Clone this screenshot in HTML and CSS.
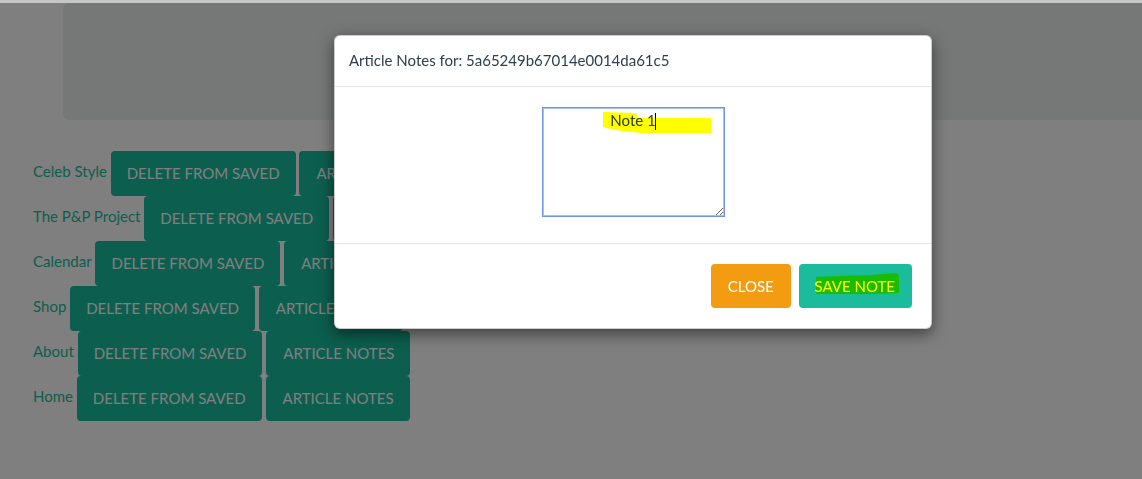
FILE: index.html
```html
<!DOCTYPE html>
<html lang="en">
<head>
<meta charset="utf-8">
<title>Saved Articles</title>
<link rel="stylesheet" href="styles.css">
</head>
<body>
<div class="topline"></div>
<div class="jumbotron"></div>
<div class="saved-list">
  <div class="saved-row"><a class="saved-title" href="#">Celeb Style</a> <button class="btn btn-success btn-delete">Delete from saved</button> <button class="btn btn-success btn-notes">Article Notes</button></div>
  <div class="saved-row"><a class="saved-title" href="#">The P&amp;P Project</a> <button class="btn btn-success btn-delete">Delete from saved</button> <button class="btn btn-success btn-notes">Article Notes</button></div>
  <div class="saved-row"><a class="saved-title" href="#">Calendar</a> <button class="btn btn-success btn-delete">Delete from saved</button> <button class="btn btn-success btn-notes">Article Notes</button></div>
  <div class="saved-row"><a class="saved-title" href="#">Shop</a> <button class="btn btn-success btn-delete">Delete from saved</button> <button class="btn btn-success btn-notes">Article Notes</button></div>
  <div class="saved-row"><a class="saved-title" href="#">About</a> <button class="btn btn-success btn-delete">Delete from saved</button> <button class="btn btn-success btn-notes">Article Notes</button></div>
  <div class="saved-row"><a class="saved-title" href="#">Home</a> <button class="btn btn-success btn-delete">Delete from saved</button> <button class="btn btn-success btn-notes">Article Notes</button></div>
</div>

<div class="backdrop"></div>

<div class="modal-content">
  <div class="modal-header">
    <h4 class="modal-title">Article Notes for: 5a65249b67014e0014da61c5</h4>
  </div>
  <div class="modal-body">
    <textarea class="note-input">Note 1</textarea>
  </div>
  <div class="modal-footer">
    <button class="btn btn-warning">Close</button> <button class="btn btn-save">Save Note</button>
  </div>
</div>

<svg class="marker" width="1142" height="479" viewBox="0 0 1142 479" aria-hidden="true">
  <polygon fill="#ffff00" points="603,112 636,113 638,118 711,118 711,133 642,133 622,131 606,128 603,127"/>
  <polygon fill="#ffff00" points="816,277 840,276 870,275 896,273 899,275 899,293 870,294 816,294"/>
  <rect x="655" y="113" width="1" height="17" fill="#000000"/>
</svg>
</body>
</html>
```
FILE: styles.css
```css
html {
  overflow: hidden;
}

body {
  margin: 0;
  font-family: Lato, "Open Sans", sans-serif;
  font-size: 15px;
  line-height: 21px;
  color: #2c3e50;
  background: #ffffff;
}

.topline {
  height: 3px;
  background: #c6c6c6;
}

.jumbotron {
  height: 117px;
  margin: 0 -40px 31px 63px;
  background: #ecf0f1;
  border-radius: 6px;
}

.saved-list {
  padding-left: 33px;
}

.saved-row {
  white-space: nowrap;
}

.saved-title {
  color: #18bc9c;
  text-decoration: none;
  vertical-align: 2px;
}

.btn {
  display: inline-block;
  margin: 0;
  padding: 10px 15px;
  font-family: inherit;
  font-size: 15px;
  line-height: 21px;
  text-transform: uppercase;
  color: #ffffff;
  border: 2px solid transparent;
  border-radius: 4px;
  vertical-align: baseline;
  cursor: pointer;
}

.btn-delete {
  padding-left: 14px;
  padding-right: 14px;
}

.btn-notes {
  padding-left: 15px;
  padding-right: 14px;
}

.btn-success {
  background: #18bc9c;
  border-color: #18bc9c;
}

.btn-warning {
  background: #f39c12;
  border-color: #f39c12;
}

.btn-save {
  background: #1abc9c;
  border-color: #1abc9c;
  margin-left: 4px;
  padding-left: 14px;
  padding-right: 15px;
}

.backdrop {
  position: fixed;
  top: 3px;
  left: 0;
  right: 0;
  bottom: 0;
  background: rgba(0, 0, 0, 0.5);
}

.modal-content {
  position: absolute;
  top: 35px;
  left: 334px;
  width: 598px;
  box-sizing: border-box;
  background: #ffffff;
  border: 1px solid rgba(0, 0, 0, 0.2);
  border-radius: 6px;
  box-shadow: 0 5px 15px rgba(0, 0, 0, 0.5);
}

.modal-header {
  padding: 14px 15px 15px 14px;
  border-bottom: 1px solid #e5e5e5;
}

.modal-title {
  margin: 0;
  font-size: 15px;
  font-weight: 400;
  line-height: 21px;
}

.modal-body {
  padding: 20px 20px 26px;
}

.note-input {
  display: block;
  margin: 0 auto;
  width: 183px;
  height: 110px;
  box-sizing: border-box;
  padding: 2px;
  font-family: inherit;
  font-size: 15px;
  line-height: 21px;
  color: #2c3e50;
  text-align: center;
  border: 1px solid #6f95de;
  outline: 1px solid #a9c1ef;
  outline-offset: -2px;
  resize: both;
}

.modal-footer {
  padding: 20px 19px 20px 20px;
  text-align: right;
  border-top: 1px solid #e5e5e5;
}

.modal-footer .btn {
  padding-top: 10px;
  padding-bottom: 9px;
}

.marker {
  position: absolute;
  top: 0;
  left: 0;
  pointer-events: none;
  mix-blend-mode: multiply;
}
```
